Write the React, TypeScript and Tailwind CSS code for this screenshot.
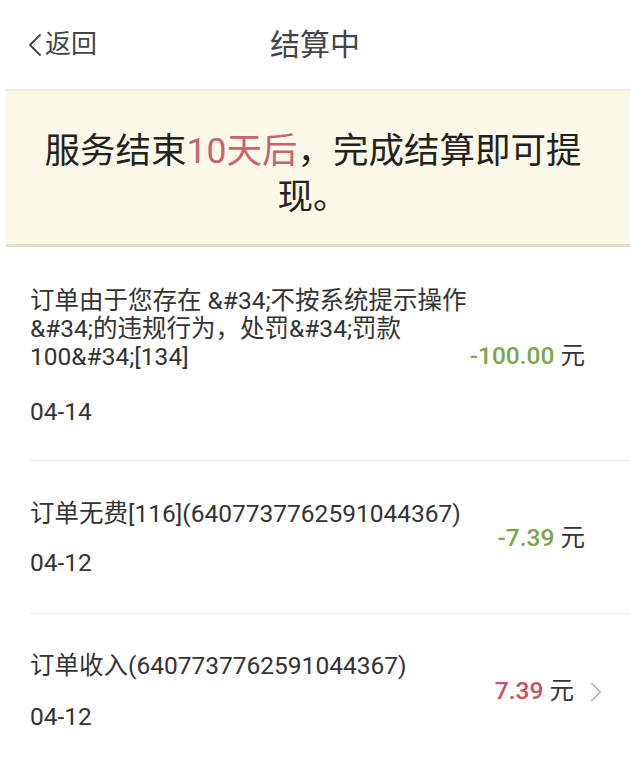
import React from "react";

const font = { fontFamily: 'Roboto, "Noto Sans CJK SC", sans-serif' };

function Chevron({ className }: { className?: string }) {
  return (
    <svg className={className} viewBox="0 0 14 24" fill="none" stroke="currentColor" strokeWidth="1.6" strokeLinecap="round" strokeLinejoin="round">
      <path d="M2 2 L12 12 L2 22" />
    </svg>
  );
}

function BackArrow() {
  return (
    <svg className="w-[14px] h-[26px] text-[#444]" viewBox="0 0 14 24" fill="none" stroke="currentColor" strokeWidth="1.8" strokeLinecap="round" strokeLinejoin="round">
      <path d="M12 2 L2 12 L12 22" />
    </svg>
  );
}

export default function App() {
  return (
    <div className="w-[630px] h-[761px] bg-white overflow-hidden text-[#333]" style={font}>
      {/* header */}
      <div className="relative h-[89px] flex items-center">
        <div className="flex items-center pl-[28px] gap-[3px] text-[#444] text-[26px]">
          <BackArrow />
          <span>返回</span>
        </div>
        <div className="absolute inset-x-0 top-0 h-[89px] flex items-center justify-center text-[30px] text-[#444] pointer-events-none">
          结算中
        </div>
      </div>

      {/* banner */}
      <div className="ml-[6px] bg-[#fdf9e8] border-t-[2px] border-[#eeeae0] border-b-[3px] border-b-[#e3dfc0] h-[158px] flex items-center justify-center pt-[12px] pr-[10px]">
        <p className="w-[560px] text-center text-[35.5px] leading-[46px] text-[#222]">
          服务结束<span className="text-[#c8626c]">10天后</span>，完成结算即可提现。
        </p>
      </div>

      {/* list */}
      <div className="pl-[30px]">
        <div className="flex items-center border-b border-[#ececec] pt-[40px] pb-[34px] pr-[45px]">
          <div className="flex-1">
            <p className="text-[24.5px] leading-[28px] text-[#333] whitespace-nowrap">
              订单由于您存在 &amp;#34;不按系统提示操作
              <br />
              &amp;#34;的违规行为，处罚&amp;#34;罚款
              <br />
              100&amp;#34;[134]
            </p>
            <p className="mt-[27px] text-[24.5px] leading-[28px] text-[#333]">04-14</p>
          </div>
          <div className="text-[24.5px] whitespace-nowrap">
            <span className="text-[#7ba649] font-medium">-100.00</span>
            <span className="text-[#333]"> 元</span>
          </div>
        </div>

        <div className="flex items-center border-b border-[#ececec] pt-[39px] pb-[36px] pr-[45px]">
          <div className="flex-1">
            <p className="text-[24.5px] leading-[28px] text-[#333]">订单无费[116](6407737762591044367)</p>
            <p className="mt-[21px] text-[24.5px] leading-[28px] text-[#333]">04-12</p>
          </div>
          <div className="text-[24.5px] whitespace-nowrap">
            <span className="text-[#7ba649] font-medium">-7.39</span>
            <span className="text-[#333]"> 元</span>
          </div>
        </div>

        <div className="flex items-center pt-[38px] pb-[37px] pr-[28px]">
          <div className="flex-1">
            <p className="text-[24.5px] leading-[28px] text-[#333]">订单收入(6407737762591044367)</p>
            <p className="mt-[23px] text-[24.5px] leading-[28px] text-[#333]">04-12</p>
          </div>
          <div className="flex items-center gap-[16px]">
            <div className="text-[24.5px] whitespace-nowrap">
              <span className="text-[#c4525f] font-medium">7.39</span>
              <span className="text-[#333]"> 元</span>
            </div>
            <Chevron className="w-[12px] h-[26px] text-[#aaa]" />
          </div>
        </div>
      </div>
    </div>
  );
}
